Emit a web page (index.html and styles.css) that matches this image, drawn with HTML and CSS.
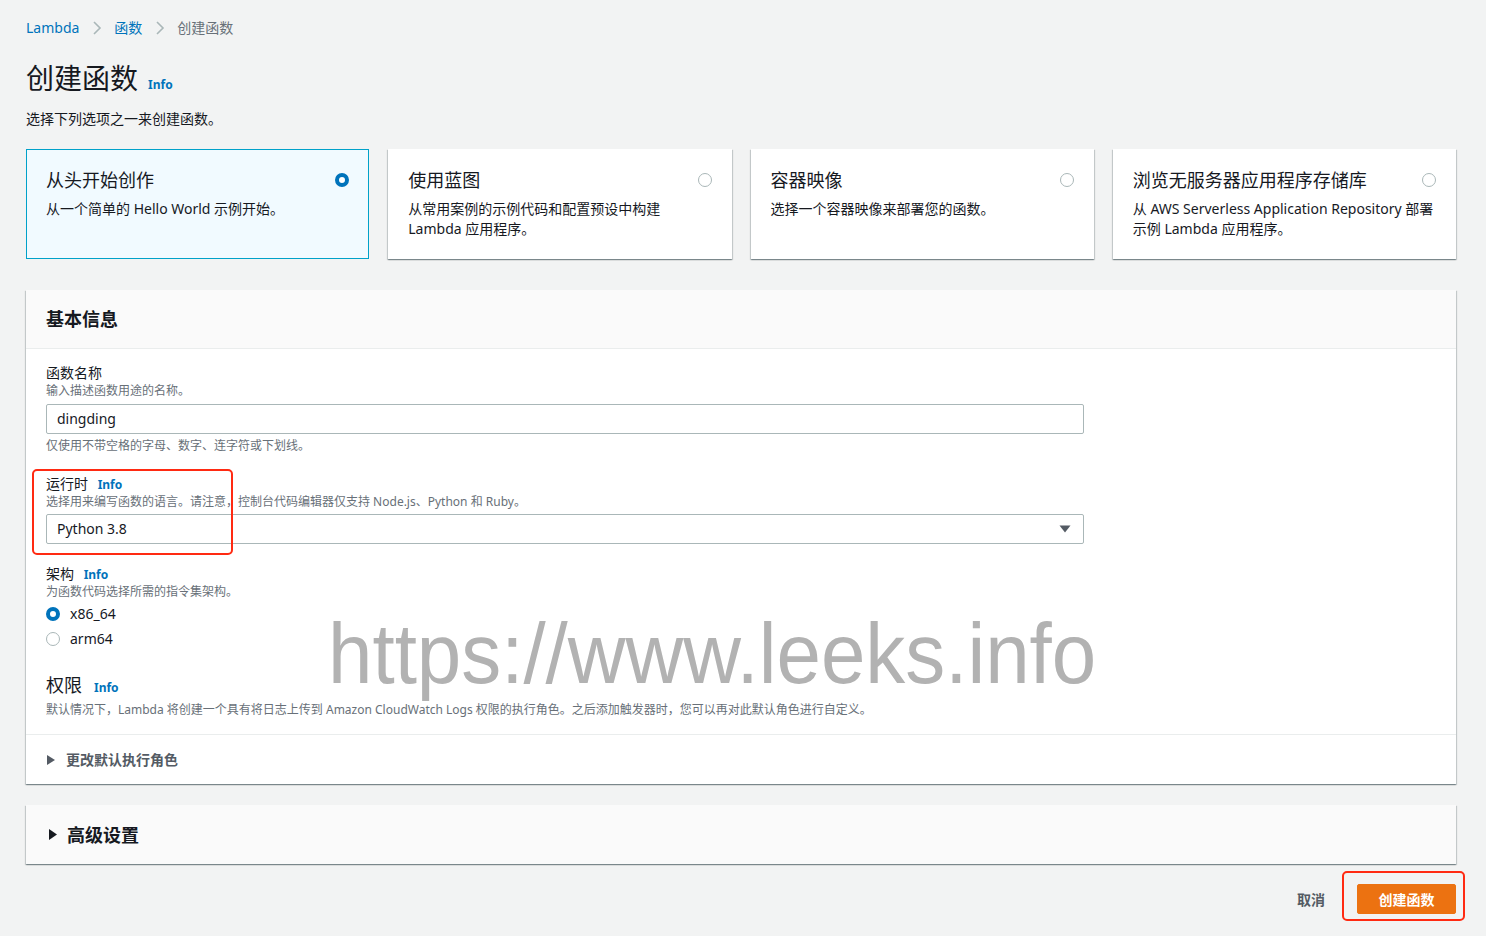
FILE: index.html
```html
<!DOCTYPE html>
<html lang="zh-CN">
<head>
<meta charset="utf-8">
<title>创建函数</title>
<link rel="stylesheet" href="styles.css">
</head>
<body>
<div class="page">
  <nav class="breadcrumb">
    <a class="crumb link">Lambda</a>
    <svg class="chev" width="12" height="16" viewBox="0 0 12 16"><path d="M3 2l6 6-6 6" fill="none" stroke="#aab7b8" stroke-width="1.6"/></svg>
    <a class="crumb link">函数</a>
    <svg class="chev" width="12" height="16" viewBox="0 0 12 16"><path d="M3 2l6 6-6 6" fill="none" stroke="#aab7b8" stroke-width="1.6"/></svg>
    <span class="crumb current">创建函数</span>
  </nav>

  <h1 class="title">创建函数 <span class="info">Info</span></h1>
  <p class="subtitle">选择下列选项之一来创建函数。</p>

  <div class="cards">
    <div class="card selected">
      <div class="card-head"><span class="card-title">从头开始创作</span><span class="radio on"></span></div>
      <p class="card-desc">从一个简单的 Hello World 示例开始。</p>
    </div>
    <div class="card">
      <div class="card-head"><span class="card-title">使用蓝图</span><span class="radio"></span></div>
      <p class="card-desc">从常用案例的示例代码和配置预设中构建 Lambda 应用程序。</p>
    </div>
    <div class="card">
      <div class="card-head"><span class="card-title">容器映像</span><span class="radio"></span></div>
      <p class="card-desc">选择一个容器映像来部署您的函数。</p>
    </div>
    <div class="card">
      <div class="card-head"><span class="card-title">浏览无服务器应用程序存储库</span><span class="radio"></span></div>
      <p class="card-desc">从 AWS Serverless Application Repository 部署示例 Lambda 应用程序。</p>
    </div>
  </div>

  <section class="panel">
    <div class="panel-header"><h2 class="panel-title">基本信息</h2></div>
    <div class="panel-body">
      <div class="field">
        <div class="label">函数名称</div>
        <div class="desc">输入描述函数用途的名称。</div>
        <div class="input">dingding</div>
        <div class="constraint">仅使用不带空格的字母、数字、连字符或下划线。</div>
      </div>
      <div class="field runtime">
        <div class="label">运行时 <span class="info">Info</span></div>
        <div class="desc">选择用来编写函数的语言。请注意，控制台代码编辑器仅支持 Node.js、Python 和 Ruby。</div>
        <div class="input select">Python 3.8<svg class="caret" width="12" height="8" viewBox="0 0 12 8"><path d="M0.5 0.5h11L6 7.5z" fill="#545b64"/></svg></div>
        <div class="annot annot-runtime"></div>
      </div>
      <div class="field">
        <div class="label">架构 <span class="info">Info</span></div>
        <div class="desc">为函数代码选择所需的指令集架构。</div>
        <div class="radios">
          <div class="radio-row"><span class="radio on"></span>x86_64</div>
          <div class="radio-row"><span class="radio"></span>arm64</div>
        </div>
      </div>
      <div class="field perm">
        <div class="perm-label">权限 <span class="info">Info</span></div>
        <div class="desc">默认情况下，Lambda 将创建一个具有将日志上传到 Amazon CloudWatch Logs 权限的执行角色。之后添加触发器时，您可以再对此默认角色进行自定义。</div>
      </div>
    </div>
    <div class="expander"><svg class="tri" width="8" height="10" viewBox="0 0 8 10"><path d="M0 0l8 5-8 5z" fill="#545b64"/></svg>更改默认执行角色</div>
  </section>

  <section class="panel advanced">
    <div class="adv-title"><svg class="tri" width="8" height="11" viewBox="0 0 8 11"><path d="M0 0l8 5.5-8 5.5z" fill="#16191f"/></svg>高级设置</div>
  </section>

  <div class="actions">
    <button class="btn-link">取消</button>
    <div class="primary-wrap">
      <button class="btn-primary">创建函数</button>
      <div class="annot annot-button"></div>
    </div>
  </div>

  <div class="watermark">https://www.leeks.info</div>
</div>
</body>
</html>
```

FILE: styles.css
```css
* { box-sizing: border-box; }
html, body { margin: 0; padding: 0; }
body {
  background: #f2f3f3;
  color: #16191f;
  font-family: "Noto Sans", "Noto Sans CJK SC", sans-serif;
  font-size: 14px;
  line-height: 20px;
}
.page {
  position: relative;
  padding: 18px 30px 20px 26px;
  min-height: 936px;
}
.breadcrumb { display: flex; align-items: center; height: 20px; }
.crumb { font-size: 14px; }
.link { color: #0073bb; }
.current { color: #687078; }
.chev { margin: 0 11px 0 12px; }

.title {
  margin: 22px 0 0;
  font-size: 28px;
  line-height: 36px;
  font-weight: 400;
  display: flex;
  align-items: baseline;
  gap: 10px;
}
.info { color: #0073bb; font-size: 12px; font-weight: 700; line-height: 16px; }
.subtitle { margin: 13px 0 0; font-size: 14px; }

.cards {
  margin-top: 20px;
  display: grid;
  grid-template-columns: repeat(4, 1fr);
  gap: 19px;
}
.card {
  height: 110px;
  background: #fff;
  border: 1px solid transparent;
  box-shadow: 0 1px 1px 0 rgba(0,28,36,.3), 1px 1px 1px 0 rgba(0,28,36,.15), -1px 1px 1px 0 rgba(0,28,36,.15);
  padding: 16px 19px 0 19px;
}
.card.selected {
  background: #f1faff;
  border-color: #00a1c9;
  box-shadow: none;
}
.card-head { display: flex; justify-content: space-between; align-items: center; height: 28px; }
.card-title { font-size: 18px; line-height: 28px; }
.card-desc { margin: 5px -4px 0 0; font-size: 14px; line-height: 20px; }

.radio {
  width: 14px; height: 14px;
  border-radius: 50%;
  border: 1px solid #aab7b8;
  background: #fff;
  flex: none;
  display: inline-block;
}
.radio.on { border: 4px solid #0073bb; }

.panel {
  margin-top: 31px;
  background: #fff;
  box-shadow: 0 1px 1px 0 rgba(0,28,36,.3), 1px 1px 1px 0 rgba(0,28,36,.15), -1px 1px 1px 0 rgba(0,28,36,.15);
}
.panel-header {
  background: #fafafa;
  border-bottom: 1px solid #eaeded;
  padding: 19px 20px;
}
.panel-title { margin: 0; font-size: 18px; line-height: 20px; font-weight: 700; }
.panel-body { padding: 14px 20px 16px; border-bottom: 1px solid #eaeded; }
.field { position: relative; }
.field + .field { margin-top: 20px; }
.label { font-size: 14px; line-height: 20px; }
.label .info { margin-left: 6px; }
.desc { color: #687078; font-size: 12px; line-height: 16px; }
.input {
  margin-top: 5px;
  width: 1038px;
  height: 30px;
  border: 1px solid #aab7b8;
  border-radius: 2px;
  padding: 0 10px;
  display: flex;
  align-items: center;
  font-size: 14px;
}
.runtime .input { margin-top: 4px; }
.select { justify-content: space-between; padding-right: 12px; }
.constraint { margin-top: 4px; color: #687078; font-size: 12px; line-height: 16px; }
.radios { margin-top: 1px; }
.radio-row { display: flex; align-items: center; gap: 10px; height: 25px; font-size: 14px; }
.perm { margin-top: 22px !important; }
.perm-label { font-size: 18px; line-height: 24px; display: flex; align-items: baseline; gap: 12px; }
.perm .desc { margin-top: 5px; }
.expander {
  height: 49px;
  padding: 0 21px;
  display: flex;
  align-items: center;
  gap: 11px;
  font-weight: 700;
  color: #545b64;
  font-size: 14px;
}
.advanced { margin-top: 21px; background: #fafafa; }
.adv-title {
  height: 59px;
  padding: 0 23px;
  display: flex;
  align-items: center;
  gap: 10px;
  font-size: 18px;
  font-weight: 700;
}

.actions {
  margin-top: 20px;
  display: flex;
  justify-content: flex-end;
  align-items: center;
  gap: 32px;
}
.btn-link {
  background: none; border: 0; padding: 0;
  font-family: inherit; font-size: 14px; font-weight: 700; color: #545b64;
}
.primary-wrap { position: relative; }
.btn-primary {
  width: 99px; height: 30px;
  background: #ec7211;
  border: 1px solid #ec7211;
  border-radius: 2px;
  color: #fff;
  font-family: inherit; font-size: 14px; font-weight: 700;
  display: block;
}
.annot {
  position: absolute;
  border: 2px solid #ff2a12;
  border-radius: 5px;
  pointer-events: none;
}
.annot-runtime { left: -14px; top: -5px; width: 201px; height: 86px; }
.annot-button { left: -15px; top: -13px; width: 123px; height: 50px; }

.watermark {
  position: absolute;
  left: 328px;
  top: 604px;
  font-family: "Liberation Sans", Arial, sans-serif;
  font-size: 85px;
  line-height: 100px;
  color: #b2b2b2;
  transform: scaleX(0.94);
  transform-origin: left top;
  white-space: nowrap;
  pointer-events: none;
}
```
